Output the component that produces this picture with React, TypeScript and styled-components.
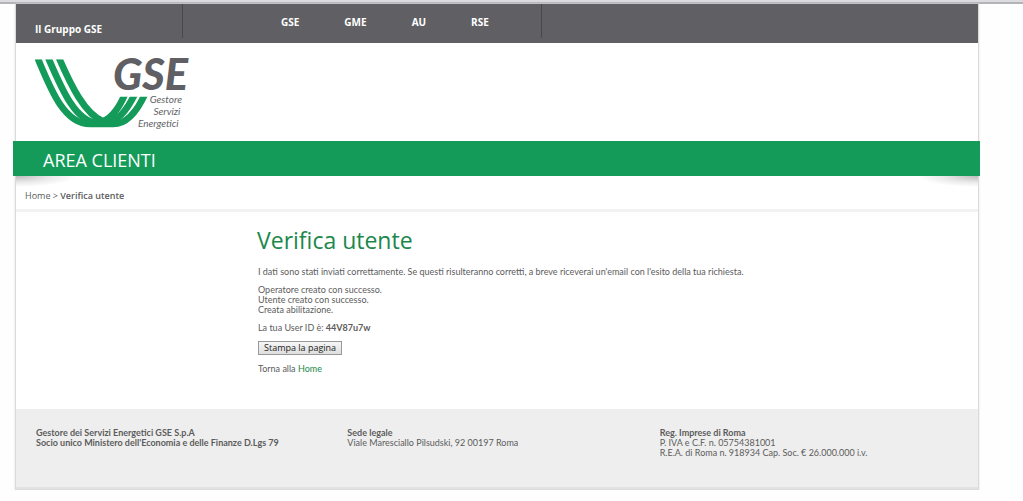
import React from "react";
import styled, { createGlobalStyle } from "styled-components";

const GlobalStyle = createGlobalStyle`
  *, *::before, *::after { box-sizing: border-box; }
  body {
    margin: 0;
    background: #fefefe;
    color: #5c5c5c;
    font: 9px/10px Lato, "Open Sans", sans-serif;
  }
  a { color: inherit; text-decoration: none; }
  b { font-weight: 700; }
`;

const WindowEdge = styled.div`
  height: 4px;
  background: #dcdce0;
  border-bottom: 2px solid #b4b4b8;
`;

const Page = styled.div`
  margin: 0 44px 0 15px;
  border: solid #dadada;
  border-width: 0 1px 1px;
  box-shadow: 0 0 2px #e4e4e4;
  background: #fff;
`;

const TopBar = styled.header`
  display: flex;
  align-items: flex-start;
  height: 39px;
  background: #605f64;
  color: #fff;
  font-family: "Open Sans", sans-serif;
  font-size: 10px;
  line-height: 14px;
  font-weight: 700;
`;

const GroupName = styled.div`
  width: 167px;
  height: 34px;
  padding: 18px 0 0 19px;
  border-right: 1px solid #48474b;
`;

const GroupNav = styled.nav`
  display: flex;
  gap: 45px;
  width: 359px;
  height: 34px;
  padding: 11px 0 0 98px;
  border-right: 1px solid #48474b;
`;

const Brand = styled.div`
  height: 98px;
  padding: 16px 19px 0;
`;

const LogoArt = styled.svg`
  display: block;
  overflow: visible;
`;

const Banner = styled.div`
  height: 35px;
  margin: 0 -2px 0 -3px;
  padding: 0 30px;
  background: #149b5a;
  color: #fff;
  font-family: "Open Sans", sans-serif;
  font-size: 18px;
  font-weight: 500;
  line-height: 38px;
`;

const Corners = styled.div`
  height: 12px;
  background:
    radial-gradient(60px 11px at 0 0, #bcbcbc, #e8e8e8 55%, transparent) left / 60px 12px no-repeat,
    radial-gradient(60px 11px at 100% 0, #bcbcbc, #e8e8e8 55%, transparent) right / 60px 12px no-repeat;
`;

const Breadcrumb = styled.nav`
  height: 24px;
  padding: 1px 9px 0;
  border-bottom: 3px solid #f2f2f2;
  font-family: "Open Sans", sans-serif;
  line-height: 14px;

  b { font-weight: 600; }
`;

const Main = styled.main`
  padding: 15px 20px 27px 242px;
`;

const Title = styled.h1`
  margin: 0 0 14px -1px;
  color: #1b884b;
  font-family: "Open Sans", sans-serif;
  font-size: 23px;
  line-height: 26px;
  font-weight: 400;
`;

const Paragraph = styled.p`
  margin: 0 0 8px;
`;

const PrintButton = styled.button`
  display: block;
  height: 14px;
  margin: 0 0 9px;
  padding: 0 5px;
  border: 1px solid #999;
  border-radius: 0;
  background: linear-gradient(#f6f6f6, #dedede);
  color: #222;
  font: 9px/12px "Open Sans", sans-serif;
`;

const HomeLink = styled.a`
  && { color: #1b884b; }
`;

const Footer = styled.footer`
  display: grid;
  grid-template-columns: 311fr 312fr 298fr;
  height: 80px;
  padding: 19px 20px 0;
  background: #eee;
  border-bottom: 2px solid #e2e2e2;
`;

function Logo() {
  return (
    <LogoArt width="156" height="72" viewBox="0 0 468 216" role="img" aria-label="GSE Gestore Servizi Energetici">
      <defs>
        <clipPath id="ribbon">
          <path d="M0 1H150V113H350V210H0Z" />
        </clipPath>
      </defs>
      <g clipPath="url(#ribbon)" fill="none" stroke="#149b5a" strokeWidth="20">
        <path d="M5 -10C45 85 85 195 165 195H235C275 195 305 160 331 103" />
        <path d="M37 -10C78 85 120 190 190 193C250 193 275 155 301 103" />
        <path d="M69 -10C110 85 150 165 204 187C232 176 252 148 271 103" />
      </g>
      <g fontFamily="Lato, sans-serif" fontStyle="italic" fill="#605f64">
        <text x="234" y="93" fontSize="130" fontWeight="900">GSE</text>
        <g fontSize="30" textAnchor="end">
          <text x="441" y="132">Gestore</text>
          <text x="436" y="168">Servizi</text>
          <text x="431" y="205">Energetici</text>
        </g>
      </g>
    </LogoArt>
  );
}

export default function App() {
  return (
    <>
      <GlobalStyle />
      <WindowEdge />
      <Page>
        <TopBar>
          <GroupName>Il Gruppo GSE</GroupName>
          <GroupNav>
            <a href="#gse">GSE</a>
            <a href="#gme">GME</a>
            <a href="#au">AU</a>
            <a href="#rse">RSE</a>
          </GroupNav>
        </TopBar>
        <Brand>
          <Logo />
        </Brand>
        <Banner>AREA CLIENTI</Banner>
        <Corners />
        <Breadcrumb aria-label="Percorso">
          <a href="#home">Home</a> &gt; <b>Verifica utente</b>
        </Breadcrumb>
        <Main>
          <Title>Verifica utente</Title>
          <Paragraph>
            I dati sono stati inviati correttamente. Se questi risulteranno corretti, a breve riceverai
            un'email con l'esito della tua richiesta.
          </Paragraph>
          <Paragraph>
            Operatore creato con successo.
            <br />
            Utente creato con successo.
            <br />
            Creata abilitazione.
          </Paragraph>
          <Paragraph>
            La tua User ID è: <b>44V87u7w</b>
          </Paragraph>
          <PrintButton type="button">Stampa la pagina</PrintButton>
          <Paragraph>
            Torna alla <HomeLink href="#home">Home</HomeLink>
          </Paragraph>
        </Main>
        <Footer>
          <div>
            <b>
              Gestore dei Servizi Energetici GSE S.p.A
              <br />
              Socio unico Ministero dell'Economia e delle Finanze D.Lgs 79
            </b>
          </div>
          <div>
            <b>Sede legale</b>
            <br />
            Viale Maresciallo Pilsudski, 92 00197 Roma
          </div>
          <div>
            <b>Reg. Imprese di Roma</b>
            <br />
            P. IVA e C.F. n. 05754381001
            <br />
            R.E.A. di Roma n. 918934 Cap. Soc. € 26.000.000 i.v.
          </div>
        </Footer>
      </Page>
    </>
  );
}
